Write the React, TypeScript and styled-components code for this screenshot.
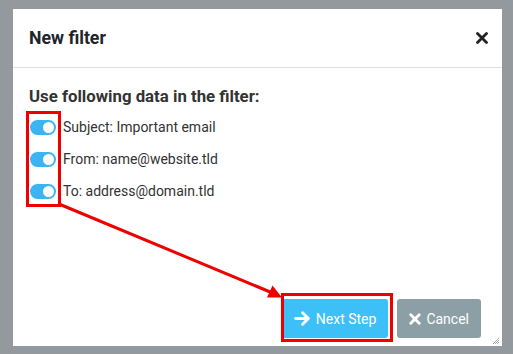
import { FC } from "react";
import styled, { createGlobalStyle } from "styled-components";

const Global = createGlobalStyle`
    html, body {
        margin: 0;
        padding: 0;
        background: #93999c;
        font-family: Roboto, "Liberation Sans", Arial, sans-serif;
    }
`;

const Page = styled.div`
    height: 354px;
    padding: 9px 11px 0 13px;
    box-sizing: border-box;
`;

const Dialog = styled.div`
    position: relative;
    width: 489px;
    height: 337px;
    background: #fff;
    display: flex;
    flex-direction: column;
`;

const Header = styled.div`
    height: 58px;
    display: flex;
    align-items: center;
    justify-content: space-between;
    padding: 0 14px 0 16px;
    border-bottom: 1px solid #dde1e4;
`;

const Title = styled.h2`
    margin: 0;
    font-size: 17.7px;
    font-weight: 700;
    color: #212529;
`;

const Close = styled.button`
    border: 0;
    background: none;
    padding: 0;
    width: 12px;
    height: 12px;
    display: flex;
    cursor: pointer;
`;

const Body = styled.div`
    flex: 1;
    padding: 18px 16px 0 16px;
`;

const Lead = styled.h3`
    margin: 0 0 10px 0;
    font-size: 16.8px;
    line-height: 20px;
    font-weight: 700;
    color: #333;
`;

const Options = styled.div`
    display: flex;
    flex-direction: column;
    gap: 10px;
`;

const Row = styled.label`
    display: flex;
    align-items: center;
    gap: 7px;
    height: 22px;
    padding-left: 1px;
    font-size: 14px;
    color: #333;
`;

const Toggle = styled.span<{ $on: boolean }>`
    position: relative;
    width: 26px;
    height: 15px;
    border-radius: 8px;
    background: ${p => (p.$on ? "#3bb4f2" : "#ccc")};
    &::after {
        content: "";
        position: absolute;
        top: 2px;
        left: ${p => (p.$on ? "13px" : "2px")};
        width: 11px;
        height: 11px;
        border-radius: 50%;
        background: #fff;
    }
`;

const Footer = styled.div`
    display: flex;
    justify-content: flex-end;
    gap: 9px;
    padding: 0 21px 8px 0;
`;

const Button = styled.button<{ $tone: "primary" | "muted" }>`
    height: 39px;
    border: 0;
    border-radius: 3px;
    padding: 0 ${p => (p.$tone === "primary" ? "12px 0 13px" : "12px")};
    display: flex;
    align-items: center;
    gap: 5px;
    font-family: inherit;
    font-size: 14px;
    color: #fff;
    background: ${p => (p.$tone === "primary" ? "#3dbff8" : "#8c9fa6")};
`;

const Grip = styled.svg`
    position: absolute;
    right: 3px;
    bottom: 2px;
`;

const Annot = styled.svg`
    position: absolute;
    left: 0;
    top: 0;
    pointer-events: none;
`;

const OPTIONS = [
    "Subject: Important email",
    "From: name@website.tld",
    "To: address@domain.tld",
];

const App: FC = () => {
    return (
        <Page>
            <Global />
            <Dialog>
                <Header>
                    <Title>New filter</Title>
                    <Close aria-label="close">
                        <svg width="12" height="12" viewBox="0 0 12 12">
                            <path d="M1.5 1.5 L10.5 10.5 M10.5 1.5 L1.5 10.5" stroke="#222" strokeWidth="2.8" strokeLinecap="round" />
                        </svg>
                    </Close>
                </Header>
                <Body>
                    <Lead>Use following data in the filter:</Lead>
                    <Options>
                        {OPTIONS.map(o => (
                            <Row key={o}>
                                <Toggle $on />
                                {o}
                            </Row>
                        ))}
                    </Options>
                </Body>
                <Footer>
                    <Button $tone="primary">
                        <svg width="17" height="15" viewBox="0 0 17 15">
                            <path d="M1.6 7.5 H14 M8.6 1.8 L14.4 7.5 L8.6 13.2" stroke="#fff" strokeWidth="2.9" fill="none" strokeLinecap="round" strokeLinejoin="round" />
                        </svg>
                        Next Step
                    </Button>
                    <Button $tone="muted">
                        <svg width="12" height="12" viewBox="0 0 12 12">
                            <path d="M1.8 1.8 L10.2 10.2 M10.2 1.8 L1.8 10.2" stroke="#fff" strokeWidth="2.9" strokeLinecap="round" />
                        </svg>
                        Cancel
                    </Button>
                </Footer>
                <Grip width="6" height="6" viewBox="0 0 6 6">
                    <path d="M0 6 L6 0 M2 6 L6 2 M4 6 L6 4" stroke="#999" strokeWidth="0.8" />
                </Grip>
                <Annot width="489" height="337" viewBox="0 0 489 337">
                    <rect x="14.5" y="103.5" width="32" height="93" fill="none" stroke="#ee0000" strokeWidth="3" />
                    <rect x="269.5" y="285.5" width="109" height="46" fill="none" stroke="#ee0000" strokeWidth="3" />
                    <line x1="46" y1="195" x2="262" y2="285" stroke="#ee0000" strokeWidth="3" />
                    <path d="M269 288.5 L254 288.5 L259.5 276.5 Z" fill="#ee0000" />
                </Annot>
            </Dialog>
        </Page>
    );
};

export default App;
